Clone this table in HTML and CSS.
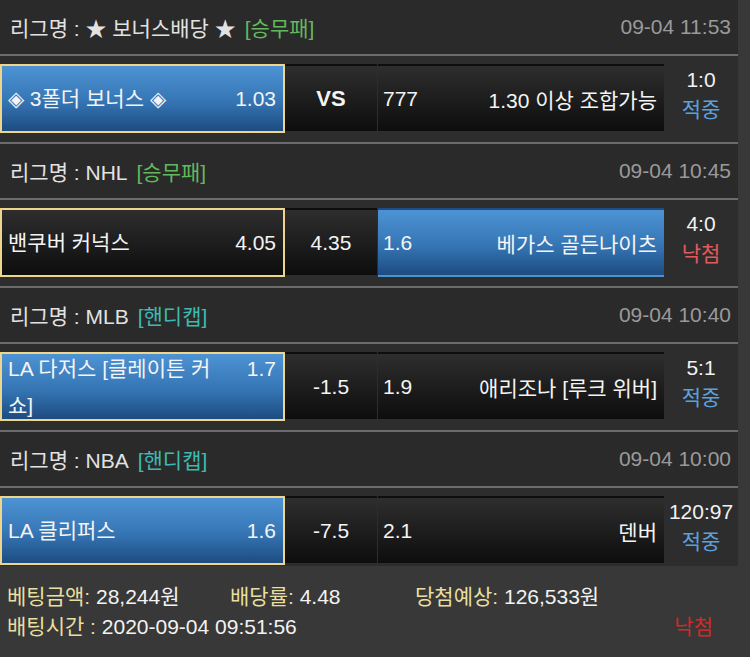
FILE: index.html
```html
<!DOCTYPE html>
<html>

<head>
    <title>Bet History</title>
    <meta charset="UTF-8">
    <meta name="viewport" content="width=device-width, initial-scale=1.0">
    <link rel="stylesheet" href="styles.css">
</head>

<body>
    <div class="list">
        <!-- game 1 -->
        <div class="game">
            <div class="league">
                <span class="league-name">리그명 : ★ 보너스배당 ★<span class="type type-wdl">[승무패]</span></span>
                <span class="league-time">09-04 11:53</span>
            </div>
            <div class="bet">
                <div class="cell home blue picked">
                    <div class="cell-text"><span class="odds">1.03</span>◈ 3폴더 보너스 ◈</div>
                </div>
                <div class="cell mid"><b class="vs">VS</b></div>
                <div class="cell away">
                    <span>777</span>
                    <span>1.30 이상 조합가능</span>
                </div>
                <div class="score">
                    <span>1:0</span>
                    <span class="hit">적중</span>
                </div>
            </div>
        </div>

        <!-- game 2 -->
        <div class="game">
            <div class="league">
                <span class="league-name">리그명 : NHL<span class="type type-wdl">[승무패]</span></span>
                <span class="league-time">09-04 10:45</span>
            </div>
            <div class="bet">
                <div class="cell home picked">
                    <div class="cell-text"><span class="odds">4.05</span>밴쿠버 커넉스</div>
                </div>
                <div class="cell mid">4.35</div>
                <div class="cell away blue">
                    <span>1.6</span>
                    <span>베가스 골든나이츠</span>
                </div>
                <div class="score">
                    <span>4:0</span>
                    <span class="miss">낙첨</span>
                </div>
            </div>
        </div>

        <!-- game 3 -->
        <div class="game">
            <div class="league">
                <span class="league-name">리그명 : MLB<span class="type type-hdc">[핸디캡]</span></span>
                <span class="league-time">09-04 10:40</span>
            </div>
            <div class="bet">
                <div class="cell home blue picked">
                    <div class="cell-text"><span class="odds">1.7</span>LA 다저스 [클레이튼 커<br>쇼]</div>
                </div>
                <div class="cell mid">-1.5</div>
                <div class="cell away">
                    <span>1.9</span>
                    <span>애리조나 [루크 위버]</span>
                </div>
                <div class="score">
                    <span>5:1</span>
                    <span class="hit">적중</span>
                </div>
            </div>
        </div>

        <!-- game 4 -->
        <div class="game">
            <div class="league">
                <span class="league-name">리그명 : NBA<span class="type type-hdc">[핸디캡]</span></span>
                <span class="league-time">09-04 10:00</span>
            </div>
            <div class="bet">
                <div class="cell home blue picked">
                    <div class="cell-text"><span class="odds">1.6</span>LA 클리퍼스</div>
                </div>
                <div class="cell mid">-7.5</div>
                <div class="cell away">
                    <span>2.1</span>
                    <span>덴버</span>
                </div>
                <div class="score">
                    <span>120:97</span>
                    <span class="hit">적중</span>
                </div>
            </div>
        </div>
    </div>

    <div class="summary">
        <div class="summary-line">
            <span class="s-amount"><span class="label">베팅금액:</span> 28,244원</span>
            <span class="s-rate"><span class="label">배당률:</span> 4.48</span>
            <span><span class="label">당첨예상:</span> 126,533원</span>
        </div>
        <div class="summary-line">
            <span><span class="label">배팅시간 :</span> 2020-09-04 09:51:56</span>
            <span class="result-miss">낙첨</span>
        </div>
    </div>
</body>

</html>
```

FILE: styles.css
```css
body {
    margin: 0;
    background-color: #383838;
    color: #f2f2f2;
    font-family: "Liberation Sans", "Noto Sans CJK KR", sans-serif;
    font-size: 21px;
}

.list {
    width: 738px;
    background-color: #2c2c2c;
}

.game + .game {
    border-top: 2px solid #6c6c6c;
}

.league {
    height: 54px;
    display: flex;
    align-items: center;
    justify-content: space-between;
    padding: 0 7px 0 10px;
    border-bottom: 2px solid #6c6c6c;
    background-color: #2a2a2a;
    color: #e2e2e2;
}

.type {
    margin-left: 9px;
}

.type-wdl {
    color: #62b85c;
}

.type-hdc {
    color: #3cbab2;
}

.league-time {
    color: #9a9a9a;
}

.bet {
    display: flex;
    padding: 8px 0 9px;
    background-color: #2d2d2d;
}

.game:last-child .bet {
    padding-bottom: 1px;
}

.cell {
    height: 69px;
    box-sizing: border-box;
    border: 2px solid transparent;
    display: flex;
    align-items: center;
    background: linear-gradient(#2e2e2e, #0d0d0d);
    color: #f4f4f4;
}

.cell.blue {
    background: linear-gradient(#4d93d4, #3575b4 55%, #1d4c80);
}

.cell.picked {
    border-color: #eed58c;
}

.home {
    width: 285px;
    padding: 0 7px 0 6px;
}

.cell-text {
    flex: 1;
    line-height: 37px;
}

.odds {
    float: right;
}

.mid {
    width: 92px;
    margin-right: 1px;
    justify-content: center;
}

.vs {
    font-size: 22px;
}

.away {
    width: 286px;
    padding: 0 5px 0 3px;
    justify-content: space-between;
}

.score {
    flex: 1;
    display: flex;
    flex-direction: column;
    align-items: center;
    justify-content: center;
    padding-bottom: 8px;
    line-height: 30px;
}

.hit {
    color: #5aa2df;
}

.miss {
    color: #e25a5a;
}

.summary {
    padding: 16px 37px 15px 7px;
}

.summary-line {
    display: flex;
    line-height: 30px;
}

.label {
    color: #e8dfa0;
}

.s-amount {
    width: 223px;
}

.s-rate {
    width: 185px;
}

.result-miss {
    margin-left: auto;
    color: #d22a2a;
}
```
